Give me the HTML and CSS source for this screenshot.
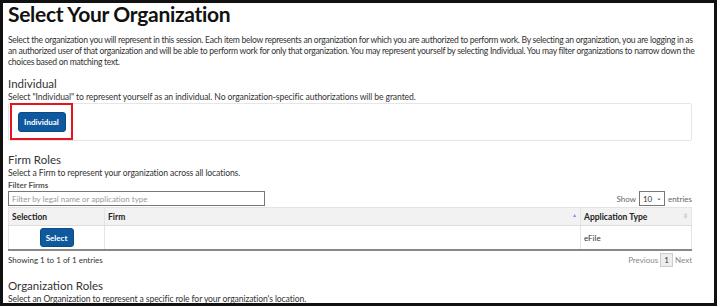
FILE: index.html
```html
<!DOCTYPE html>
<html lang="en">
<head>
    <meta charset="UTF-8">
    <title>Select Your Organization</title>
    <link rel="stylesheet" href="styles.css">
</head>
<body>
    <div class="frame">
        <h1 class="page-title">Select Your Organization</h1>
        <p class="intro">Select the organization you will represent in this session. Each item below represents an organization for which you are authorized to perform work. By selecting an organization, you are logging in as <span class="keep">an authorized</span> user of that organization and will be able to perform work for only that organization. You may represent yourself by selecting Individual. You may filter organizations to narrow down the choices based on matching text.</p>

        <!-- individual -->
        <div class="section">
            <h2 class="section-title">Individual</h2>
            <p class="section-desc">Select "Individual" to represent yourself as an individual. No organization-specific authorizations will be granted.</p>
            <div class="panel">
                <div class="highlight">
                    <button class="btn">Individual</button>
                </div>
            </div>
        </div>

        <!-- firms -->
        <div class="section firm-section">
            <h2 class="section-title">Firm Roles</h2>
            <p class="section-desc">Select a Firm to represent your organization across all locations.</p>
            <label class="filter-label">Filter Firms</label>
            <div class="table-tools">
                <input type="text" class="filter-input" placeholder="Filter by legal name or application type">
                <div class="length">
                    Show
                    <span class="length-select">10 <span class="caret">&#8964;</span></span>
                    entries
                </div>
            </div>
            <table class="grid">
                <thead>
                    <tr>
                        <th class="col-sel">Selection</th>
                        <th class="col-firm">Firm <span class="sort sort-up">&#9650;</span></th>
                        <th class="col-type">Application Type <span class="sort">&#8661;</span></th>
                    </tr>
                </thead>
                <tbody>
                    <tr>
                        <td class="col-sel"><button class="btn btn-small">Select</button></td>
                        <td></td>
                        <td>eFile</td>
                    </tr>
                </tbody>
            </table>
            <div class="table-foot">
                <span class="info">Showing 1 to 1 of 1 entries</span>
                <span class="pager">Previous <span class="page-num">1</span> Next</span>
            </div>
        </div>

        <!-- organizations -->
        <div class="section org-section">
            <h2 class="section-title">Organization Roles</h2>
            <p class="section-desc">Select an Organization to represent a specific role for your organization's location.</p>
        </div>
    </div>
</body>
</html>
```

FILE: styles.css
```css
body {
    margin: 0;
    font-family: Lato, "Noto Sans", sans-serif;
    color: #222;
    background: #fff;
}
.frame {
    width: 706px;
    height: 300px;
    border: 3px solid #111;
    padding: 0 0 0 5px;
    overflow: hidden;
}
.page-title {
    margin: -1px 0 0 0;
    font-size: 21px;
    font-weight: 700;
    letter-spacing: -0.3px;
    line-height: 24px;
    color: #111;
}
.intro {
    margin: 9px 0 0 0;
    width: 694px;
    font-size: 8.6px;
    letter-spacing: -0.28px;
    line-height: 11px;
    color: #333;
}
.keep {
    white-space: nowrap;
}
.section {
    width: 684px;
}
.section-title {
    margin: 9px 0 0 0;
    font-size: 11.5px;
    font-weight: 400;
    line-height: 14px;
    color: #333;
}
.section-desc {
    margin: 0;
    font-size: 8.6px;
    letter-spacing: -0.1px;
    line-height: 12px;
    color: #333;
}
.panel {
    height: 36px;
    border: 1px solid #e6e6e6;
    border-radius: 2px;
}
.highlight {
    display: inline-flex;
    align-items: center;
    justify-content: center;
    width: 59px;
    height: 33px;
    border: 2px solid #e3151f;
    margin: -1px 0 0 1px;
}
.btn {
    background-color: #0f5a9e;
    color: #fff;
    border: 1px solid #0a4a85;
    border-radius: 3px;
    font-family: inherit;
    font-size: 8px;
    font-weight: 700;
    width: 48px;
    height: 20px;
    padding: 0;
    cursor: pointer;
}
.firm-section .section-title {
    margin-top: 12px;
}
.filter-label {
    display: block;
    font-size: 8px;
    font-weight: 700;
    line-height: 12px;
    color: #555;
}
.table-tools {
    display: flex;
    justify-content: space-between;
    align-items: center;
}
.filter-input {
    width: 257px;
    height: 15px;
    box-sizing: border-box;
    border: 1px solid #777;
    padding: 0 3px;
    margin: 0;
    font-family: inherit;
    font-size: 8px;
    color: #999;
}
.filter-input::placeholder {
    color: #999;
}
.length {
    display: flex;
    align-items: center;
    gap: 3px;
    font-size: 8px;
    color: #666;
}
.length-select {
    display: inline-flex;
    justify-content: space-between;
    align-items: center;
    width: 26px;
    height: 15px;
    box-sizing: border-box;
    border: 1px solid #777;
    padding: 0 2px 0 3px;
    color: #333;
}
.caret {
    font-size: 7px;
    line-height: 4px;
    margin-top: -3px;
}
.grid {
    width: 100%;
    border-collapse: collapse;
    margin-top: 1px;
    font-size: 8.5px;
}
.grid th {
    background-color: #f2f2f2;
    text-align: left;
    font-weight: 700;
    color: #222;
    height: 17px;
    padding: 0 3px;
    border-top: 1px solid #e4e4e4;
    border-bottom: 1px solid #ddd;
    border-left: 1px solid #e4e4e4;
}
.grid th:first-child, .grid td:first-child {
    border-left: 1px solid #e4e4e4;
}
.grid th:last-child, .grid td:last-child {
    border-right: 1px solid #e4e4e4;
}
.grid .col-sel {
    width: 89px;
}
.grid .col-type {
    width: 104px;
}
.sort {
    float: right;
    font-size: 6px;
    color: #c8c8c8;
}
.sort-up {
    color: #8c8cd0;
    font-size: 5px;
}
.grid td {
    height: 23px;
    padding: 0 3px;
    border-left: 1px solid #e4e4e4;
    border-bottom: 2px solid #888;
    color: #333;
    font-size: 8px;
}
.grid td.col-sel {
    text-align: center;
}
.btn-small {
    width: 34px;
    height: 19px;
}
.table-foot {
    display: flex;
    justify-content: space-between;
    align-items: center;
    height: 18px;
    font-size: 8px;
    color: #333;
}
.pager {
    color: #888;
}
.page-num {
    display: inline-block;
    border: 1px solid #ccc;
    background: #eee;
    color: #333;
    padding: 1px 3px;
}
.org-section .section-title {
    margin-top: 10px;
}
```
